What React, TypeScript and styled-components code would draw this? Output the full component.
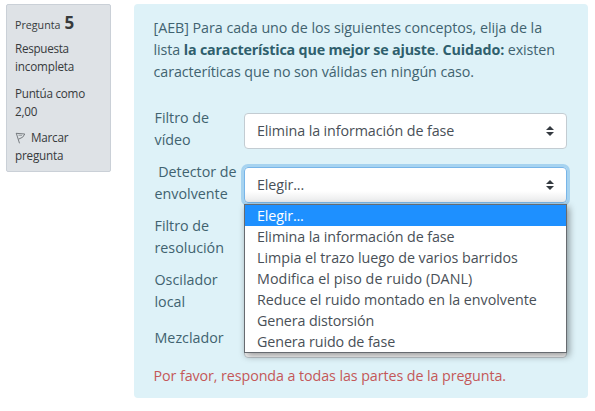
import React from "react";
import styled, { createGlobalStyle } from "styled-components";

const GlobalStyle = createGlobalStyle`
  * { box-sizing: border-box; }
  body {
    margin: 0;
    background: #fff;
    font-family: "Open Sans", "Noto Sans", sans-serif;
    font-size: 14.3px;
    line-height: 22px;
    overflow: hidden;
  }
`;

const Page = styled.main`
  display: flex;
  align-items: flex-start;
  gap: 23px;
  padding: 4px 7px 0 6px;
`;

const InfoCard = styled.aside`
  width: 105px;
  height: 168px;
  padding: 7px 8px;
  border: 1px solid #cad0d7;
  border-radius: 2px;
  background: #dee2e6;
  color: #373a3c;
  font-size: 11.7px;
  line-height: 18px;
`;

const QuestionTitle = styled.h3`
  display: flex;
  align-items: baseline;
  gap: 4px;
  margin: 0 0 5px;
  height: 22px;
  font-size: 10.7px;
  font-weight: 400;
  line-height: 22px;
`;

const QuestionNumber = styled.strong`
  font-size: 17px;
  font-weight: 700;
`;

const InfoBlock = styled.div`
  margin-bottom: 8.5px;
`;

const FlagIcon = styled.svg`
  width: 11px;
  height: 12px;
  margin-right: 5px;
  vertical-align: -2px;
`;

const Formulation = styled.section`
  flex: none;
  width: 454px;
  height: 394px;
  padding: 13px 19px 0 19.5px;
  border-radius: 4px;
  background: #def2f8;
  color: #416370;
`;

const QuestionText = styled.div`
  height: 66px;
`;

const Line = styled.span<{ $tracking?: number }>`
  display: block;
  white-space: pre;
  letter-spacing: ${(p) => p.$tracking ?? 0}px;
`;

const Strong = styled.b<{ $tracking?: number }>`
  color: #2f5f6d;
  letter-spacing: ${(p) => p.$tracking ?? 0}px;
`;

const Answers = styled.div`
  display: grid;
  grid-template-columns: 89.5px 323px;
  grid-template-rows: repeat(4, 54px) 39px;
  align-items: center;
  margin-top: 19px;
  margin-left: 1px;
`;

const Label = styled.div`
  letter-spacing: 0.03px;
`;

const SelectCell = styled.div`
  position: relative;
  margin-top: 4px;
`;

const SelectBox = styled.div<{ $focused?: boolean }>`
  display: flex;
  align-items: center;
  justify-content: space-between;
  height: 36px;
  padding: 0 12px;
  border: 1px solid ${(p) => (p.$focused ? "#78b5e8" : "#c3ccd2")};
  border-radius: 4px;
  background: ${(p) => (p.$focused ? "linear-gradient(#fff 68%, #e9eaeb)" : "#fff")};
  box-shadow: ${(p) => (p.$focused ? "0 0 0 3px #a6d3f0" : "none")};
  color: #495057;
`;

const Arrows = styled.svg`
  width: 8px;
  height: 10px;
  margin-top: -1px;
`;

const Menu = styled.ul`
  position: absolute;
  z-index: 2;
  top: 37px;
  left: 0;
  width: 323px;
  margin: 0;
  padding: 0;
  list-style: none;
  border: 1px solid #676b70;
  background: #fff;
  box-shadow: 2px 3px 7px rgba(0, 0, 0, 0.4);
`;

const Option = styled.li<{ $active?: boolean }>`
  height: 21px;
  padding-left: 12px;
  line-height: 21px;
  background: ${(p) => (p.$active ? "#1e90ff" : "#fff")};
  color: ${(p) => (p.$active ? "#fff" : "#495057")};
`;

const Warning = styled.div`
  margin-top: 8px;
  color: #c45858;
`;

const options: [string, number][] = [
  ["Elegir...", -0.15],
  ["Elimina la información de fase", -0.09],
  ["Limpia el trazo luego de varios barridos", -0.04],
  ["Modifica el piso de ruido (DANL)", 0.06],
  ["Reduce el ruido montado en la envolvente", -0.04],
  ["Genera distorsión", -0.12],
  ["Genera ruido de fase", -0.1],
];

const rows: { label: string[]; value?: string; open?: boolean }[] = [
  { label: ["Filtro de", "vídeo"], value: "Elimina la información de fase" },
  { label: [" Detector de", "envolvente"], value: "Elegir...", open: true },
  { label: ["Filtro de", "resolución"] },
  { label: ["Oscilador", "local"] },
  { label: ["Mezclador"] },
];

const SelectArrows = () => (
  <Arrows viewBox="0 0 8 10">
    <path d="M4 0L8 4H0ZM0 6H8L4 10Z" fill="#343a40" />
  </Arrows>
);

export default function App() {
  return (
    <>
      <GlobalStyle />
      <Page>
        <InfoCard>
          <QuestionTitle>
            Pregunta <QuestionNumber>5</QuestionNumber>
          </QuestionTitle>
          <InfoBlock>
            <Line $tracking={-0.3}>Respuesta</Line>
            <Line $tracking={-0.18}>incompleta</Line>
          </InfoBlock>
          <InfoBlock>
            <Line $tracking={-0.25}>Puntúa como</Line>
            <Line $tracking={-0.2}>2,00</Line>
          </InfoBlock>
          <InfoBlock>
            <Line $tracking={-0.25}>
              <FlagIcon viewBox="0 0 11 12" fill="none" stroke="#777c80">
                <path d="M1.2 1L4.5 11.3M1.2 1.3L9.8 2L7.7 5.2L3.5 7.2" />
                <path d="M3.4 3.2L7 3.4" strokeWidth="0.7" />
              </FlagIcon>
              Marcar
            </Line>
            <Line $tracking={-0.2}>pregunta</Line>
          </InfoBlock>
        </InfoCard>
        <Formulation>
          <QuestionText>
            <Line $tracking={-0.04}>[AEB] Para cada uno de los siguientes conceptos, elija de la</Line>
            <Line $tracking={-0.09}>
              lista <Strong $tracking={-0.18}>la característica que mejor se ajuste</Strong>.{" "}
              <Strong $tracking={-0.1}>Cuidado:</Strong> existen
            </Line>
            <Line $tracking={-0.08}>caracteríticas que no son válidas en ningún caso.</Line>
          </QuestionText>
          <Answers>
            {rows.map((row) => (
              <React.Fragment key={row.label.join(" ")}>
                <Label>
                  {row.label.map((text) => (
                    <Line key={text}>{text}</Line>
                  ))}
                </Label>
                <SelectCell>
                  <SelectBox $focused={row.open}>
                    <Line $tracking={-0.1}>{row.value}</Line>
                    <SelectArrows />
                  </SelectBox>
                  {row.open && (
                    <Menu>
                      {options.map(([text, tracking], i) => (
                        <Option key={text} $active={i === 0}>
                          <Line $tracking={tracking}>{text}</Line>
                        </Option>
                      ))}
                    </Menu>
                  )}
                </SelectCell>
              </React.Fragment>
            ))}
          </Answers>
          <Warning>
            <Line $tracking={-0.085}>Por favor, responda a todas las partes de la pregunta.</Line>
          </Warning>
        </Formulation>
      </Page>
    </>
  );
}
